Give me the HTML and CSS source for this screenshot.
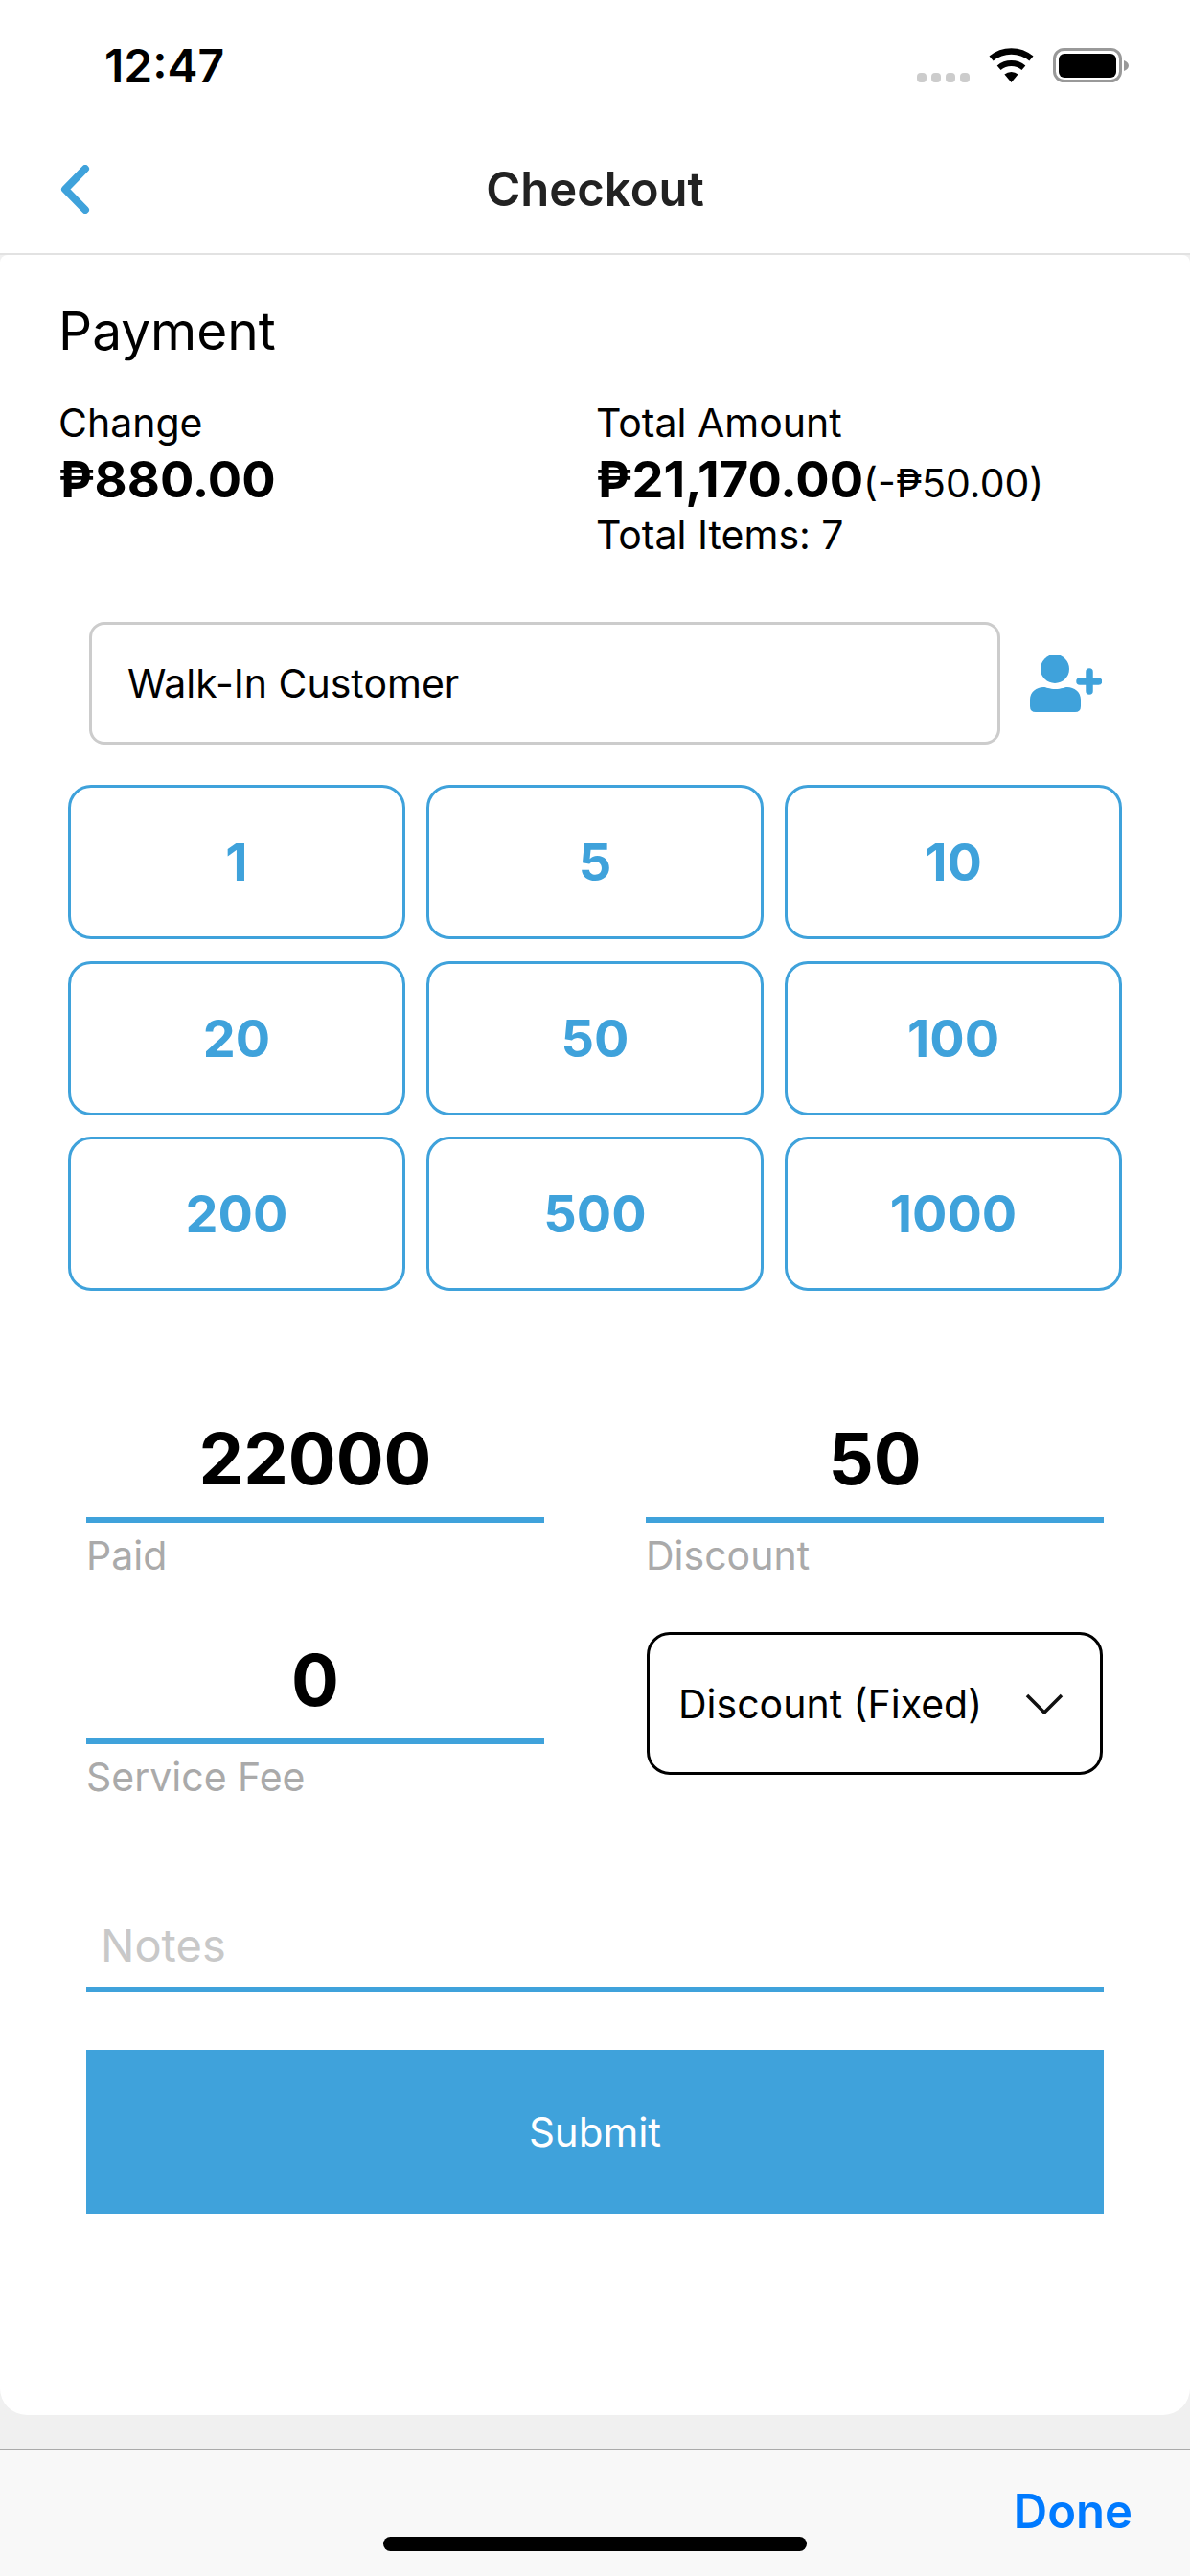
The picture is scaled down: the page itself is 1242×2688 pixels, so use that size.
FILE: index.html
```html
<!DOCTYPE html>
<html lang="en">
<head>
  <meta charset="UTF-8" />
  <meta name="viewport" content="width=device-width, initial-scale=1" />
  <title>Checkout</title>
  <link rel="stylesheet" href="styles.css">
</head>
<body>
  <div class="screen">

    <header class="top">
      <div class="status">
        <span class="time">12:47</span>
        <div class="statusIcons">
          <div class="signal"><i></i><i></i><i></i><i></i></div>
          <svg class="wifi" width="47" height="36" viewBox="0 0 47 36">
            <path d="M2.6 11.1A32.5 32.5 0 0 1 44.4 11.1" fill="none" stroke="#000" stroke-width="6.5"/>
            <path d="M10.6 20.7A20 20 0 0 1 36.4 20.7" fill="none" stroke="#000" stroke-width="6"/>
            <path d="M23.5 36L16.4 27.6A11 11 0 0 1 30.6 27.6Z" fill="#000"/>
          </svg>
          <svg class="battery" width="79" height="36" viewBox="0 0 79 36">
            <rect x="1.5" y="1.5" width="69" height="33" rx="10" fill="none" stroke="#999" stroke-width="3"/>
            <rect x="6" y="6" width="60" height="25" rx="6" fill="#000"/>
            <path d="M74 13C77 14 79 16 79 18.500C79 21 77 23 74 24Z" fill="#999"/>
          </svg>
        </div>
      </div>
      <nav class="nav">
        <svg class="back" width="32" height="51" viewBox="0 0 32 51">
          <path d="M26 4L5 25.500L26 47" fill="none" stroke="#3fa2db" stroke-width="8" stroke-linecap="round" stroke-linejoin="round"/>
        </svg>
        <h1>Checkout</h1>
        <span></span>
      </nav>
    </header>

    <main class="card">
      <h2>Payment</h2>

      <section class="summary">
        <div>
          <div class="sumLabel">Change</div>
          <div class="sumAmount">₱880.00</div>
        </div>
        <div>
          <div class="sumLabel">Total Amount</div>
          <div class="sumAmount">₱21,170.00<small>(-₱50.00)</small></div>
          <div class="sumLabel items">Total Items: 7</div>
        </div>
      </section>

      <div class="customerRow">
        <div class="customer">Walk-In Customer</div>
        <svg class="addUser" width="75" height="60" viewBox="0 0 75 60">
          <circle cx="26" cy="15" r="15" fill="#3fa2db"/>
          <path d="M0 54V47C0 39 7 34 14 34C17 34 20 36 26.500 36C33 36 36 34 39 34C46 34 53 39 53 47V54Q53 60 47 60H6Q0 60 0 54Z" fill="#3fa2db"/>
          <path d="M52 28H71.500M62 18V38" fill="none" stroke="#3fa2db" stroke-width="7.500" stroke-linecap="round"/>
        </svg>
      </div>

      <div class="keypad">
        <button>1</button>
        <button>5</button>
        <button>10</button>
        <button>20</button>
        <button>50</button>
        <button>100</button>
        <button>200</button>
        <button>500</button>
        <button>1000</button>
      </div>

      <div class="fields">
        <div class="field">
          <div class="fieldValue">22000</div>
          <div class="fieldLabel">Paid</div>
        </div>
        <div class="field">
          <div class="fieldValue">50</div>
          <div class="fieldLabel">Discount</div>
        </div>
        <div class="field">
          <div class="fieldValue">0</div>
          <div class="fieldLabel">Service Fee</div>
        </div>
        <div class="select">
          <span>Discount (Fixed)</span>
          <svg width="40" height="22" viewBox="0 0 40 22">
            <path d="M2 2L20 20L38 2" fill="none" stroke="#111" stroke-width="3.500"/>
          </svg>
        </div>
      </div>

      <div class="notes">Notes</div>
      <button class="submit">Submit</button>
    </main>

    <footer class="toolbar">
      <div class="done">Done</div>
      <div class="homeBar"></div>
    </footer>

  </div>
</body>
</html>
```

FILE: styles.css
```css
* {
  box-sizing: border-box;
}

body {
  margin: 0;
  font-family: Inter, 'Liberation Sans', sans-serif;
  color: #000;
}

.screen {
  width: 1242px;
  height: 2688px;
  display: flex;
  flex-direction: column;
  background: #f0f0f0;
  overflow: hidden;
}

/* top bars */
.top {
  height: 266px;
  background: #fff;
  border-bottom: 2px solid #e2e2e2;
  flex: none;
}

.status {
  height: 136px;
  padding: 0 64px 0 109px;
  display: flex;
  align-items: center;
  justify-content: space-between;
}

.time {
  font-size: 48px;
  font-weight: 600;
}

.statusIcons {
  display: flex;
  align-items: flex-end;
  gap: 20px;
}

.signal {
  display: flex;
  gap: 5px;
}

.signal i {
  width: 10px;
  height: 10px;
  border-radius: 4px;
  background: #ccc;
}

.wifi, .battery {
  display: block;
}

.nav {
  height: 122px;
  padding: 0 63px;
  display: grid;
  grid-template-columns: 1fr auto 1fr;
  align-items: center;
}

.nav h1 {
  margin: 0;
  font-size: 49px;
  font-weight: 600;
  color: #222;
}

/* white sheet */
.card {
  flex: 1;
  background: #fff;
  border-radius: 8px 8px 28px 28px;
  padding-top: 49px;
}

.card h2 {
  margin: 0 0 0 61px;
  font-size: 55px;
  line-height: 60px;
  font-weight: 400;
}

.summary {
  margin-top: 42px;
  padding-left: 61px;
  display: grid;
  grid-template-columns: 561px 1fr;
}

.sumLabel {
  font-size: 41px;
  line-height: 48px;
}

.items {
  line-height: 46px;
}

.sumAmount {
  font-size: 52.500px;
  line-height: 70px;
  font-weight: 700;
  white-space: nowrap;
}

.sumAmount small {
  font-size: 41px;
  font-weight: 400;
  line-height: 1;
}

.customerRow {
  margin: 68px 0 0 93px;
  display: flex;
  align-items: center;
  gap: 31px;
}

.customer {
  width: 951px;
  height: 128px;
  padding-left: 37px;
  display: flex;
  align-items: center;
  font-size: 41px;
  border: 3px solid #ccc;
  border-radius: 16px;
}

.keypad {
  margin: 42px 0 0 71px;
  display: grid;
  grid-template-columns: repeat(3, 352px);
  grid-auto-rows: 161px;
  column-gap: 22px;
  row-gap: 22.500px;
}

.keypad button {
  font-family: inherit;
  font-size: 54px;
  font-weight: 700;
  color: #3fa2db;
  background: #fff;
  border: 3px solid #3fa2db;
  border-radius: 24px;
  padding: 0;
}

.fields {
  margin: 125px 90px 0;
  display: grid;
  grid-template-columns: 478px 478px;
  column-gap: 106px;
  row-gap: 56px;
}

.fieldValue {
  height: 117px;
  padding-bottom: 11px;
  font-size: 74px;
  line-height: 100px;
  font-weight: 700;
  text-align: center;
  border-bottom: 6px solid #3fa2db;
}

.fieldLabel {
  margin-top: 10px;
  font-size: 41px;
  line-height: 48px;
  color: #aaa;
}

.select {
  height: 149px;
  margin: 0 1px;
  padding: 0 38px 0 30px;
  display: flex;
  align-items: center;
  justify-content: space-between;
  font-size: 41px;
  border: 3px solid #000;
  border-radius: 24px;
}

.notes {
  margin: 122px 90px 0;
  height: 79px;
  padding: 0 0 13px 15px;
  font-size: 47px;
  line-height: 60px;
  color: #c8c8c8;
  border-bottom: 6px solid #3fa2db;
}

.submit {
  display: block;
  width: 1062px;
  height: 171px;
  margin: 60px 90px 0;
  font-family: inherit;
  font-size: 42px;
  color: #fff;
  background: #3fa2db;
  border: none;
  padding: 0;
}

/* bottom toolbar */
.toolbar {
  height: 133px;
  margin-top: 35px;
  padding-top: 44px;
  flex: none;
  display: flex;
  flex-direction: column;
  background: #f8f8f8;
  border-top: 2px solid #aaa;
}

.done {
  align-self: flex-end;
  margin-right: 60px;
  font-size: 49px;
  line-height: 40px;
  font-weight: 600;
  color: #007aff;
}

.homeBar {
  align-self: center;
  width: 442px;
  height: 15px;
  margin-top: 6px;
  border-radius: 8px;
  background: #000;
}
```
